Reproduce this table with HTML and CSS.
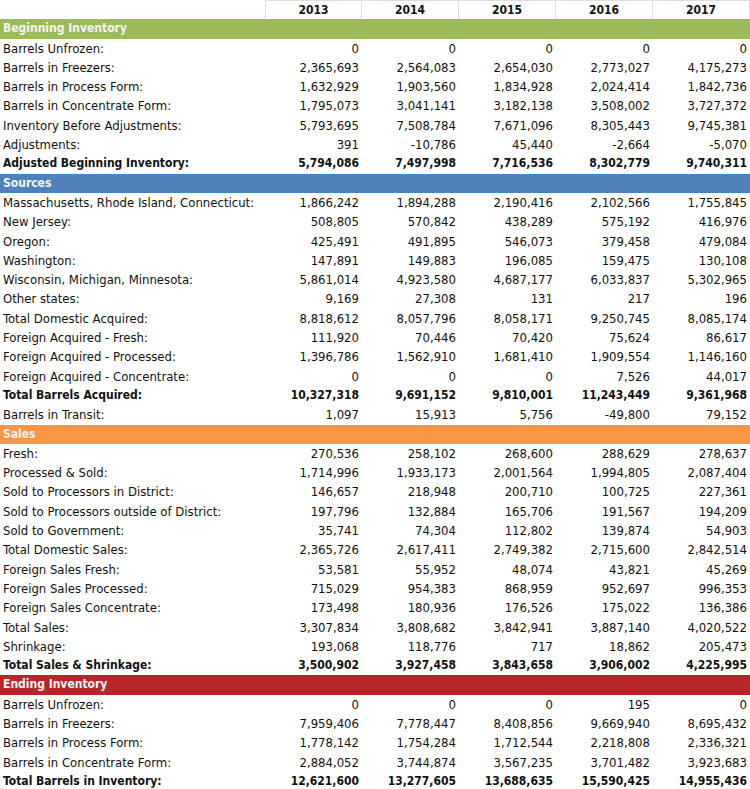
FILE: index.html
```html
<!DOCTYPE html>
<html>
<head>
<meta charset="utf-8">
<link rel="stylesheet" href="styles.css">
</head>
<body>
<div class="sheet">
  <div class="row head">
    <div class="lab"></div><div class="yr">2013</div><div class="yr">2014</div><div class="yr">2015</div><div class="yr">2016</div><div class="yr">2017</div>
  </div>
  <div class="band green">Beginning Inventory</div>
  <div class="row"><div class="lab">Barrels Unfrozen:</div><div>0</div><div>0</div><div>0</div><div>0</div><div>0</div></div>
  <div class="row"><div class="lab">Barrels in Freezers:</div><div>2,365,693</div><div>2,564,083</div><div>2,654,030</div><div>2,773,027</div><div>4,175,273</div></div>
  <div class="row"><div class="lab">Barrels in Process Form:</div><div>1,632,929</div><div>1,903,560</div><div>1,834,928</div><div>2,024,414</div><div>1,842,736</div></div>
  <div class="row"><div class="lab">Barrels in Concentrate Form:</div><div>1,795,073</div><div>3,041,141</div><div>3,182,138</div><div>3,508,002</div><div>3,727,372</div></div>
  <div class="row"><div class="lab">Inventory Before Adjustments:</div><div>5,793,695</div><div>7,508,784</div><div>7,671,096</div><div>8,305,443</div><div>9,745,381</div></div>
  <div class="row"><div class="lab">Adjustments:</div><div>391</div><div>-10,786</div><div>45,440</div><div>-2,664</div><div>-5,070</div></div>
  <div class="row total"><div class="lab">Adjusted Beginning Inventory:</div><div>5,794,086</div><div>7,497,998</div><div>7,716,536</div><div>8,302,779</div><div>9,740,311</div></div>
  <div class="band blue">Sources</div>
  <div class="row"><div class="lab">Massachusetts, Rhode Island, Connecticut:</div><div>1,866,242</div><div>1,894,288</div><div>2,190,416</div><div>2,102,566</div><div>1,755,845</div></div>
  <div class="row"><div class="lab">New Jersey:</div><div>508,805</div><div>570,842</div><div>438,289</div><div>575,192</div><div>416,976</div></div>
  <div class="row"><div class="lab">Oregon:</div><div>425,491</div><div>491,895</div><div>546,073</div><div>379,458</div><div>479,084</div></div>
  <div class="row"><div class="lab">Washington:</div><div>147,891</div><div>149,883</div><div>196,085</div><div>159,475</div><div>130,108</div></div>
  <div class="row"><div class="lab">Wisconsin, Michigan, Minnesota:</div><div>5,861,014</div><div>4,923,580</div><div>4,687,177</div><div>6,033,837</div><div>5,302,965</div></div>
  <div class="row"><div class="lab">Other states:</div><div>9,169</div><div>27,308</div><div>131</div><div>217</div><div>196</div></div>
  <div class="row"><div class="lab">Total Domestic Acquired:</div><div>8,818,612</div><div>8,057,796</div><div>8,058,171</div><div>9,250,745</div><div>8,085,174</div></div>
  <div class="row"><div class="lab">Foreign Acquired - Fresh:</div><div>111,920</div><div>70,446</div><div>70,420</div><div>75,624</div><div>86,617</div></div>
  <div class="row"><div class="lab">Foreign Acquired - Processed:</div><div>1,396,786</div><div>1,562,910</div><div>1,681,410</div><div>1,909,554</div><div>1,146,160</div></div>
  <div class="row"><div class="lab">Foreign Acquired - Concentrate:</div><div>0</div><div>0</div><div>0</div><div>7,526</div><div>44,017</div></div>
  <div class="row total"><div class="lab">Total Barrels Acquired:</div><div>10,327,318</div><div>9,691,152</div><div>9,810,001</div><div>11,243,449</div><div>9,361,968</div></div>
  <div class="row"><div class="lab">Barrels in Transit:</div><div>1,097</div><div>15,913</div><div>5,756</div><div>-49,800</div><div>79,152</div></div>
  <div class="band orange">Sales</div>
  <div class="row"><div class="lab">Fresh:</div><div>270,536</div><div>258,102</div><div>268,600</div><div>288,629</div><div>278,637</div></div>
  <div class="row"><div class="lab">Processed &amp; Sold:</div><div>1,714,996</div><div>1,933,173</div><div>2,001,564</div><div>1,994,805</div><div>2,087,404</div></div>
  <div class="row"><div class="lab">Sold to Processors in District:</div><div>146,657</div><div>218,948</div><div>200,710</div><div>100,725</div><div>227,361</div></div>
  <div class="row"><div class="lab">Sold to Processors outside of District:</div><div>197,796</div><div>132,884</div><div>165,706</div><div>191,567</div><div>194,209</div></div>
  <div class="row"><div class="lab">Sold to Government:</div><div>35,741</div><div>74,304</div><div>112,802</div><div>139,874</div><div>54,903</div></div>
  <div class="row"><div class="lab">Total Domestic Sales:</div><div>2,365,726</div><div>2,617,411</div><div>2,749,382</div><div>2,715,600</div><div>2,842,514</div></div>
  <div class="row"><div class="lab">Foreign Sales Fresh:</div><div>53,581</div><div>55,952</div><div>48,074</div><div>43,821</div><div>45,269</div></div>
  <div class="row"><div class="lab">Foreign Sales Processed:</div><div>715,029</div><div>954,383</div><div>868,959</div><div>952,697</div><div>996,353</div></div>
  <div class="row"><div class="lab">Foreign Sales Concentrate:</div><div>173,498</div><div>180,936</div><div>176,526</div><div>175,022</div><div>136,386</div></div>
  <div class="row"><div class="lab">Total Sales:</div><div>3,307,834</div><div>3,808,682</div><div>3,842,941</div><div>3,887,140</div><div>4,020,522</div></div>
  <div class="row"><div class="lab">Shrinkage:</div><div>193,068</div><div>118,776</div><div>717</div><div>18,862</div><div>205,473</div></div>
  <div class="row total"><div class="lab">Total Sales &amp; Shrinkage:</div><div>3,500,902</div><div>3,927,458</div><div>3,843,658</div><div>3,906,002</div><div>4,225,995</div></div>
  <div class="band red">Ending Inventory</div>
  <div class="row"><div class="lab">Barrels Unfrozen:</div><div>0</div><div>0</div><div>0</div><div>195</div><div>0</div></div>
  <div class="row"><div class="lab">Barrels in Freezers:</div><div>7,959,406</div><div>7,778,447</div><div>8,408,856</div><div>9,669,940</div><div>8,695,432</div></div>
  <div class="row"><div class="lab">Barrels in Process Form:</div><div>1,778,142</div><div>1,754,284</div><div>1,712,544</div><div>2,218,808</div><div>2,336,321</div></div>
  <div class="row"><div class="lab">Barrels in Concentrate Form:</div><div>2,884,052</div><div>3,744,874</div><div>3,567,235</div><div>3,701,482</div><div>3,923,683</div></div>
  <div class="row total"><div class="lab">Total Barrels in Inventory:</div><div>12,621,600</div><div>13,277,605</div><div>13,688,635</div><div>15,590,425</div><div>14,955,436</div></div>
</div>
</body>
</html>
```
FILE: styles.css
```css
html, body {
  margin: 0;
  padding: 0;
  background: #fff;
}
.sheet {
  width: 750px;
  font-family: "DejaVu Sans Condensed", "DejaVu Sans", sans-serif;
  font-size: 13px;
  color: #111;
}
.row {
  display: grid;
  grid-template-columns: 265px repeat(5, 1fr);
  height: 19.3px;
  line-height: 19.3px;
}
.row > div {
  text-align: right;
  padding-right: 3px;
  white-space: nowrap;
}
.row > .lab {
  text-align: left;
  padding-left: 3px;
  padding-right: 0;
}
.head > div {
  box-sizing: border-box;
}
.head > .yr {
  text-align: center;
  font-weight: bold;
  font-size: 12px;
  border-top: 1px solid #dedede;
  border-right: 1px solid #dedede;
  padding: 0;
  line-height: 18px;
}
.head > div:nth-child(2) {
  border-left: 1px solid #dedede;
}
.total {
  font-weight: bold;
  font-size: 12px;
}
.band {
  height: 19.3px;
  line-height: 19.3px;
  padding-left: 3px;
  font-weight: bold;
  font-size: 12px;
  color: #f4f4f4;
  box-sizing: border-box;
}
.green { background: #9bbb59; }
.blue { background: #4f81bd; }
.orange { background: #f79646; }
.red { background: #b5272b; }
```
